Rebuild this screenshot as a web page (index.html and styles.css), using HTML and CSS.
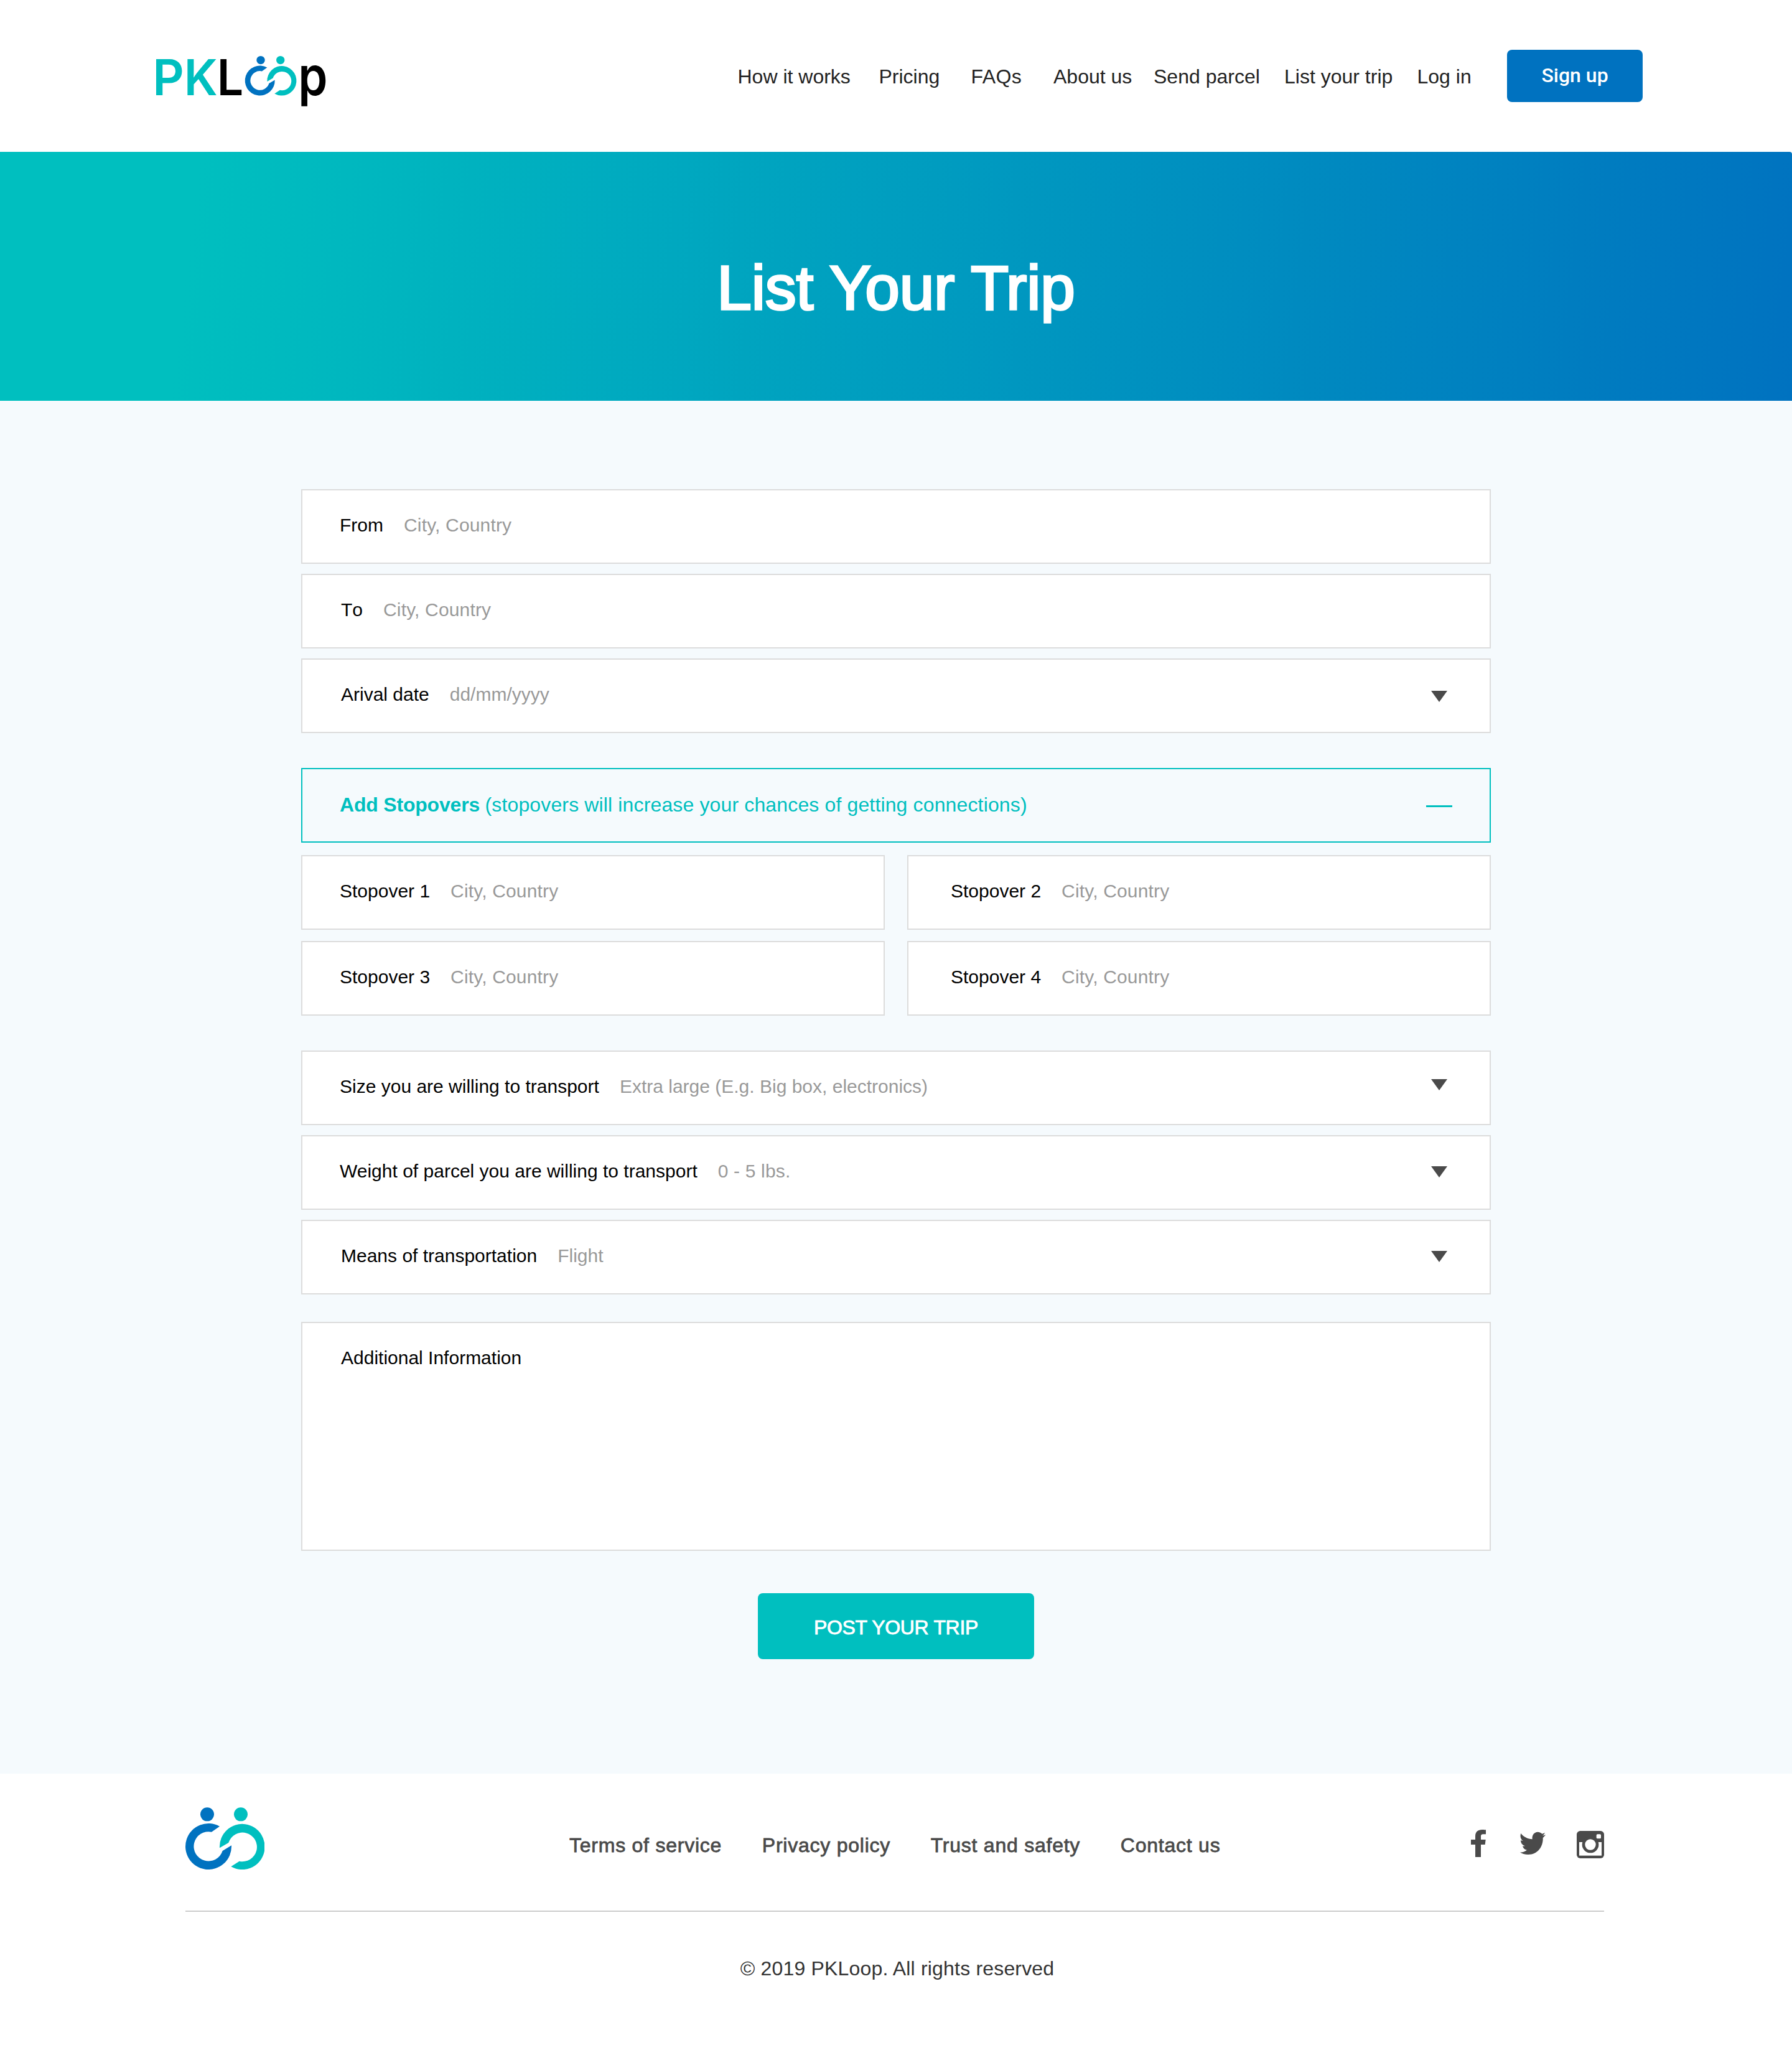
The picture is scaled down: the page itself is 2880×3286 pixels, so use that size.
FILE: index.html
```
<!DOCTYPE html>
<html lang="en">
<head>
<meta charset="utf-8">
<title>PKLoop – List Your Trip</title>
<link rel="stylesheet" href="styles.css">
</head>
<body>
<svg class="defs" aria-hidden="true">
  <symbol id="caret" viewBox="0 0 26 18"><path d="M0 0H26L13 18Z"/></symbol>
  <g id="rings">
    <path class="blue" d="M219 163L180 190A71 71 0 1 0 233 281L276 255A111 111 0 1 1 219 163Z"/>
    <path class="teal" d="M219 267L262 242A70 70 0 1 1 314 331L274 357A109 110 0 1 0 219 267Z"/>
  </g>
</svg>

<header class="header">
  <svg class="logo" viewBox="230 40 320 164" role="img" aria-label="PKLoop">
    <text class="logo-text teal" transform="translate(250.7 153.3) scale(.98 1)" x="-5.6" y="0">P</text>
    <text class="logo-text teal" transform="translate(301 153.3) scale(.96 1)" x="-5.6" y="0">K</text>
    <text class="logo-text" transform="translate(354 153.3) scale(.94 1)" x="-5.6" y="0">L</text>
    <circle class="blue" cx="419" cy="96.6" r="6.7"/>
    <circle class="teal" cx="450.7" cy="96.6" r="6.7"/>
    <use href="#rings" transform="translate(382 73.3) scale(.2162)"/>
    <text class="logo-text logo-p" transform="translate(484 153.3) scale(.88 1)" x="-5.4" y="0">p</text>
  </svg>
  <nav class="nav">
    <a>How it works</a>
    <a>Pricing</a>
    <a class="nav-faq">FAQs</a>
    <a>About us</a>
    <a>Send parcel</a>
    <a>List your trip</a>
    <a>Log in</a>
    <a class="signup">Sign up</a>
  </nav>
</header>

<section class="hero"><h1>List Your Trip</h1></section>

<main class="form">
  <div class="group">
    <div class="field"><span class="label">From</span><span class="hint">City, Country</span></div>
    <div class="field indent"><span class="label no-kern">To</span><span class="hint">City, Country</span></div>
    <div class="field indent"><span class="label">Arival date</span><span class="hint date">dd/mm/yyyy</span><svg class="caret"><use href="#caret"/></svg></div>
  </div>

  <div class="stopovers">
    <div class="toggle"><b>Add Stopovers</b><span>(stopovers will increase your chances of getting connections)</span><i class="minus"></i></div>
    <div class="stops">
      <div class="field"><span class="label">Stopover 1</span><span class="hint">City, Country</span></div>
      <div class="field even"><span class="label">Stopover 2</span><span class="hint">City, Country</span></div>
      <div class="field"><span class="label">Stopover 3</span><span class="hint">City, Country</span></div>
      <div class="field even"><span class="label">Stopover 4</span><span class="hint">City, Country</span></div>
    </div>
  </div>

  <div class="group">
    <div class="field"><span class="label">Size you are willing to transport</span><span class="hint plain">Extra large (E.g. Big box, electronics)</span><svg class="caret raised"><use href="#caret"/></svg></div>
    <div class="field"><span class="label">Weight of parcel you are willing to transport</span><span class="hint">0 - 5 lbs.</span><svg class="caret middle"><use href="#caret"/></svg></div>
    <div class="field indent"><span class="label">Means of transportation</span><span class="hint plain">Flight</span><svg class="caret middle"><use href="#caret"/></svg></div>
  </div>

  <div class="field indent notes"><span class="label">Additional Information</span></div>

  <button class="post">POST YOUR TRIP</button>
</main>

<footer class="footer">
  <div class="footer-row">
    <svg class="mark" viewBox="54 71 382 302">
      <circle class="blue" cx="159" cy="105" r="33"/>
      <circle class="teal" cx="321" cy="105" r="33"/>
      <use href="#rings"/>
    </svg>
    <nav class="footer-links">
      <a>Terms of service</a>
      <a>Privacy policy</a>
      <a>Trust and safety</a>
      <a>Contact us</a>
    </nav>
    <svg class="social" viewBox="102 120 642 138" aria-label="Social links">
      <path d="M123 252V192H102V168H123V152C123 130 136 120 156 120C165 120 171 121 174 121V142H161C152 142 150 146 150 152V168H173L170 192H150V252Z"/>
      <path d="M343 138C355 154 376 165 398 166C395 146 408 131 424 131C433 131 440 135 445 140C450 139 454 137 458 134C457 140 452 145 447 149C453 148 458 147 462 145C458 151 454 155 449 159C451 200 425 240 378 240C362 240 348 236 338 229C350 230 362 226 372 218C362 217 354 210 351 199C355 200 359 200 362 198C350 195 342 184 342 171C346 173 350 174 353 174C341 166 338 150 343 138Z"/>
      <rect x="612" y="126" width="132" height="132" rx="17"/>
      <rect class="cut" x="624" y="180" width="108" height="65"/>
      <circle cx="678" cy="192" r="40"/>
      <circle class="cut" cx="678" cy="192" r="26"/>
      <rect class="cut" x="707" y="142" width="22" height="21" rx="5"/>
    </svg>
  </div>
  <p class="copyright">© 2019 PKLoop. All rights reserved</p>
</footer>
</body>
</html>
```
FILE: styles.css
```
* { box-sizing: border-box; }

body {
  margin: 0;
  width: 2880px;
  background: #fff;
  color: #000;
  font: 32px/38px "Liberation Sans", Arial, sans-serif;
}

.defs { position: absolute; width: 0; height: 0; }
.blue { fill: #0072c0; }
.teal { fill: #00bfbf; }

/* Header */
.header {
  display: flex;
  justify-content: space-between;
  height: 244px;
  padding: 0 240px 0 230px;
}
.logo { width: 320px; height: 164px; margin-top: 40px; }
.logo-text { font: 600 80px Inter, sans-serif; }
.logo-text.logo-p { font-size: 86px; }

.nav {
  display: grid;
  grid-template-columns: 227px 148px 132.5px 161px 210px 213.5px 144.5px 218px;
  align-items: center;
  color: #222;
  white-space: nowrap;
}
.nav a { padding-top: 2px; }
.nav .nav-faq { letter-spacing: .4px; }
.nav .signup {
  height: 84px;
  padding: 0;
  border-radius: 8px;
  background: #0072c0;
  color: #fff;
  font: 500 32px/82px Roboto, sans-serif;
  text-align: center;
}

/* Hero */
.hero {
  display: flex;
  align-items: center;
  justify-content: center;
  height: 400px;
  padding: 36px 0 0 0;
  border-top-right-radius: 4px;
  background: linear-gradient(97deg, #00bfbf 11%, #0072c0 100%);
}
.hero h1 {
  margin: 0;
  color: #fff;
  font-size: 100px;
  font-weight: 400;
  line-height: 120px;
  letter-spacing: -.2px;
  -webkit-text-stroke: 3.4px #fff;
}

/* Form */
.form {
  display: flex;
  flex-direction: column;
  height: 2206px;
  padding: 142px 484px 0;
  background: #f5fafd;
}
.group { display: flex; flex-direction: column; gap: 16px; }

.field, .toggle {
  display: flex;
  height: 120px;
  border: 2px solid #dcdcdc;
  background: #fff;
  padding: 0 68px 0 60px;
  font-size: 30px;
  line-height: 111px;
  white-space: nowrap;
}
.field { gap: 33px; }
.field.indent { padding-left: 62px; }
.field.even { padding-left: 68px; }
.no-kern { font-kerning: none; }
.hint { color: #999; letter-spacing: .16px; }
.hint.plain, .hint.date { letter-spacing: 0; }

.caret { width: 26px; height: 18px; margin: 50px 0 0 auto; fill: #4a4a4a; }
.caret.raised { margin-top: 44px; }
.caret.middle { margin-top: 48px; }

.stopovers { margin: 56px 0; }
.toggle {
  border-color: #00bfbf;
  background: none;
  color: #00bfbf;
  font-size: 32px;
  line-height: 114px;
}
.toggle b { width: 233.5px; letter-spacing: -.2px; }
.toggle span { letter-spacing: .14px; }
.minus { width: 42px; height: 3px; margin: 57.5px -8px 0 auto; background: #00bfbf; }

.stops {
  display: grid;
  grid-template-columns: 938px 938px;
  gap: 18px 36px;
  margin-top: 20px;
}

.notes { height: 368px; margin-top: 44px; }

.post {
  align-self: center;
  width: 444px;
  height: 106px;
  margin-top: 68px;
  padding: 3px 0 0;
  border: 0;
  border-radius: 8px;
  background: #00bfbf;
  color: #fff;
  font: 32px/38px "Liberation Sans", Arial, sans-serif;
  letter-spacing: -.32px;
  -webkit-text-stroke: .9px #fff;
}

/* Footer */
.footer { padding: 0 302px 0 298px; }
.footer-row {
  display: flex;
  align-items: flex-start;
  height: 222px;
  border-bottom: 2px solid #ccc;
}
.mark { width: 127.3px; height: 100.7px; margin-top: 53.7px; }
.footer-links {
  display: flex;
  gap: 64.7px;
  margin: 96px 0 0 489.7px;
  color: #4a4a4a;
  letter-spacing: .76px;
  white-space: nowrap;
  -webkit-text-stroke: .8px #4a4a4a;
}
.social { width: 214px; height: 46px; margin: 90px 0 0 auto; fill: #4a4a4a; }
.social .cut { fill: #fff; }
.copyright {
  margin: 72px 0 0;
  padding-left: 8px;
  color: #333;
  letter-spacing: .18px;
  text-align: center;
}
```
